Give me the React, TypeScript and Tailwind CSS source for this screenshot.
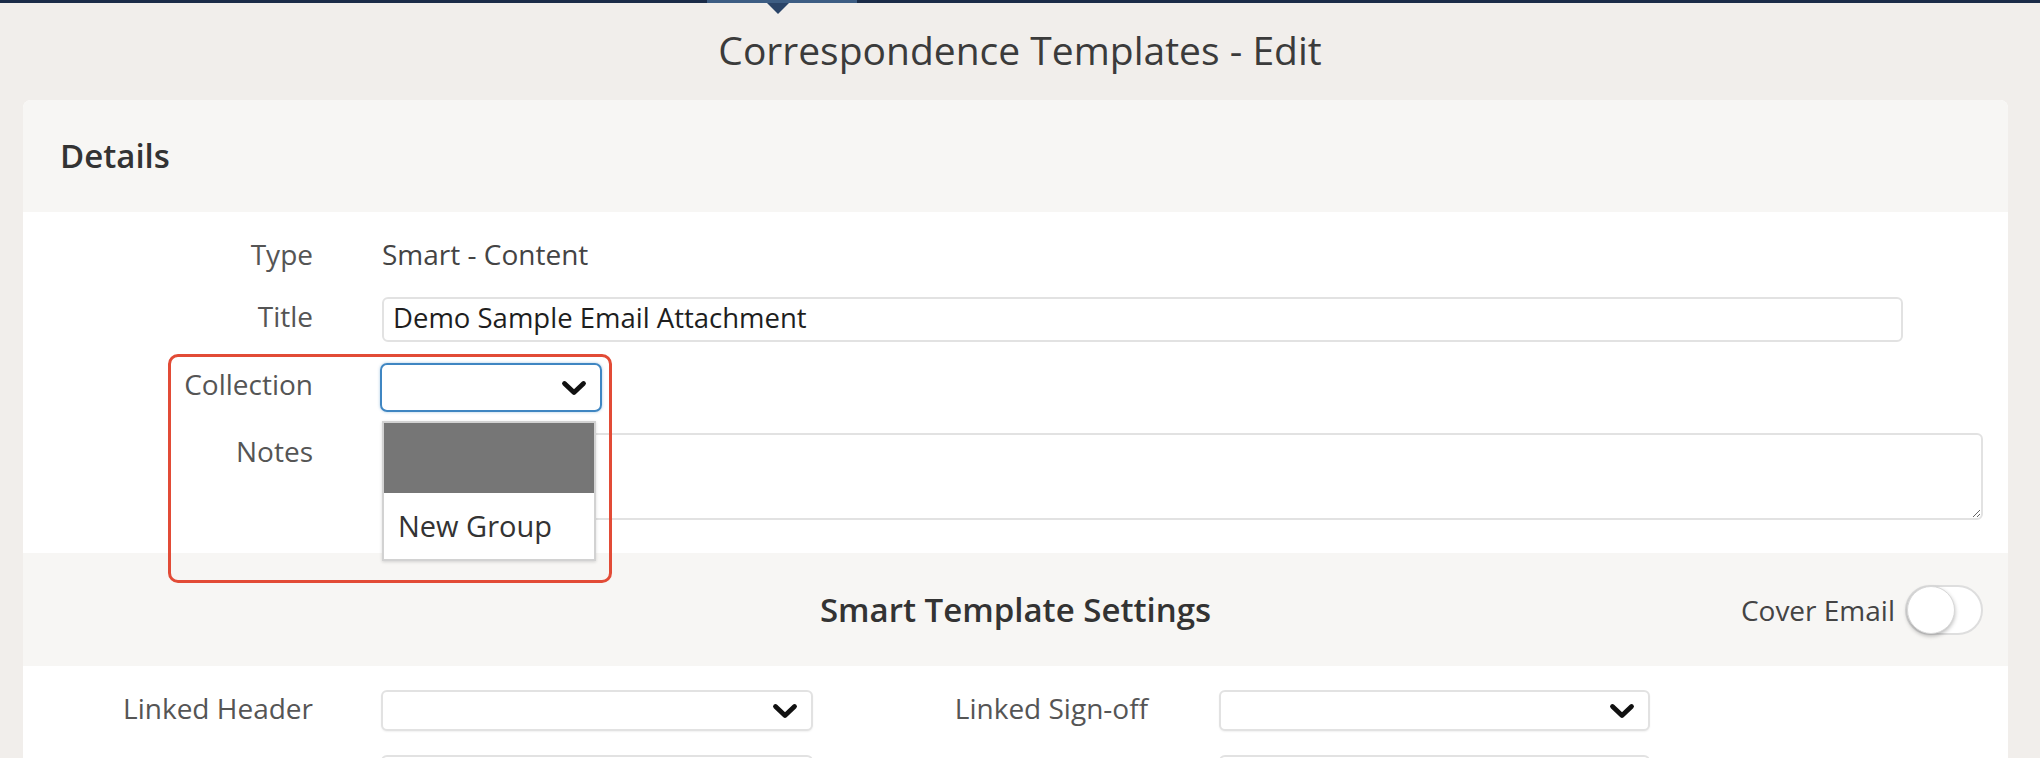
import React from 'react';

function Chevron() {
  return (
    <svg width="26" height="16" viewBox="0 0 26 16" className="shrink-0">
      <path
        d="M3.5 3.5 13 12.5 22.5 3.5"
        fill="none"
        stroke="#111"
        strokeWidth="4.8"
        strokeLinecap="round"
        strokeLinejoin="round"
      />
    </svg>
  );
}

function Select({ width, height = 'h-[41px]' }: { width: string; height?: string }) {
  return (
    <div
      className={`flex ${width} ${height} items-center justify-end rounded-[6px] border-2 border-[#e2e2e2] bg-white pr-[13px] shadow-[0_1px_2px_rgba(0,0,0,0.06)]`}
    >
      <Chevron />
    </div>
  );
}

export default function App() {
  return (
    <div className="h-[758px] overflow-hidden bg-[#f1eeeb] font-['Open_Sans',sans-serif] text-[#555]">
      {/* nav strip */}
      <div className="flex h-[3px] bg-[#1b2c48]">
        <div className="w-[707px]" />
        <div className="relative w-[150px] bg-[#3d5d83]">
          <div className="absolute left-[60px] top-full h-0 w-0 border-x-[11px] border-t-[11px] border-x-transparent border-t-[#2a4468]" />
        </div>
      </div>

      <div className="flex h-[97px] justify-center pt-[18px]">
        <h1 className="text-[39px] leading-normal text-[#3b3b3b]">Correspondence Templates - Edit</h1>
      </div>

      <div className="ml-[23px] mr-[32px] overflow-hidden rounded-t-[8px] bg-white">
        {/* Details */}
        <div className="flex h-[112px] items-center bg-[#f7f6f4] pl-[37px]">
          <h2 className="text-[33px] font-semibold text-[#333]">Details</h2>
        </div>

        <div className="relative pb-[33px] pt-[24px] text-[28px]">
          <div className="flex h-[36px] items-center">
            <span className="w-[290px] text-right">Type</span>
            <span className="ml-[69px] text-[#444]">Smart - Content</span>
          </div>

          <div className="mt-[25px] flex h-[45px] items-center">
            <span className="w-[290px] pb-[8px] text-right">Title</span>
            <div className="ml-[69px] flex h-[45px] w-[1521px] items-center rounded-[6px] border-2 border-[#e2e2e2] pb-[4px] pl-[9px] text-[27.5px] text-[#1e1e1e]">
              Demo Sample Email Attachment
            </div>
          </div>

          <div className="mt-[21px] flex h-[49px] items-center">
            <span className="w-[290px] pb-[8px] text-right">Collection</span>
            <div className="relative ml-[67px]">
              <div className="flex h-[49px] w-[222px] items-center justify-end rounded-[7px] border-2 border-[#3f86c2] pr-[13px] shadow-[0_0_3px_rgba(63,134,194,0.45)]">
                <Chevron />
              </div>
              {/* open option list */}
              <div className="absolute left-[2px] top-[58px] z-10 w-[214px] border-2 border-[#d2d2d2] bg-white shadow-[0_1px_3px_rgba(0,0,0,0.15)]">
                <div className="h-[70px] bg-[#767676]" />
                <div className="flex h-[66px] items-center pl-[14px] text-[29px] text-[#333]">New Group</div>
              </div>
            </div>
          </div>

          <div className="mt-[21px] flex items-start">
            <span className="-mt-[3px] w-[290px] text-right">Notes</span>
            <textarea className="ml-[69px] h-[87px] w-[1601px] rounded-[6px] border-2 border-[#e2e2e2] outline-none" />
          </div>

          {/* annotation */}
          <div className="pointer-events-none absolute left-[145px] top-[142px] z-20 h-[229px] w-[444px] rounded-[10px] border-[3px] border-[#e24b36]" />
        </div>

        {/* Smart Template Settings */}
        <div className="grid h-[113px] grid-cols-[1fr_auto_1fr] items-center bg-[#f7f6f4]">
          <div />
          <h2 className="text-[33px] font-semibold text-[#333]">Smart Template Settings</h2>
          <div className="flex items-center justify-end gap-[10px] pr-[25px]">
            <span className="text-[28px] text-[#444]">Cover Email</span>
            <div className="flex h-[50px] w-[78px] items-center rounded-full border-2 border-[#dedede] bg-white">
              <div className="h-[48px] w-[48px] rounded-full border border-[#d8d8d8] bg-white shadow-[0_2px_4px_rgba(0,0,0,0.28)]" />
            </div>
          </div>
        </div>

        <div className="pt-[24px] text-[28px]">
          <div className="flex h-[41px] items-center">
            <span className="w-[290px] pb-[6px] text-right">Linked Header</span>
            <div className="ml-[68px]">
              <Select width="w-[432px]" />
            </div>
            <span className="w-[335px] pb-[6px] text-right">Linked Sign-off</span>
            <div className="ml-[71px]">
              <Select width="w-[431px]" />
            </div>
          </div>
          <div className="mt-[24px] flex h-[41px] items-center">
            <span className="w-[290px]" />
            <div className="ml-[68px]">
              <Select width="w-[432px]" />
            </div>
            <span className="w-[335px]" />
            <div className="ml-[71px]">
              <Select width="w-[431px]" />
            </div>
          </div>
        </div>
      </div>
    </div>
  );
}
